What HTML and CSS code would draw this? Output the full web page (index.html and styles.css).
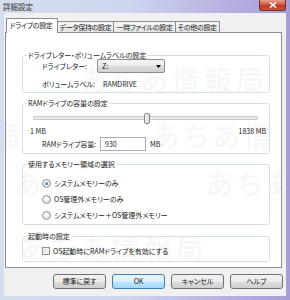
FILE: index.html
```html
<!DOCTYPE html>
<html lang="ja">
<head>
    <meta charset="UTF-8" />
    <title>詳細設定</title>
    <link rel="stylesheet" href="styles.css">
</head>
<body>
    <div class="window">
        <div class="titlebar">
            <span class="title">詳細設定</span>
            <span class="close">
                <svg width="8" height="6" viewBox="0 0 8 6"><path d="M1 0.5 L7 5.5 M7 0.5 L1 5.5" stroke="#fff" stroke-width="1.6"/></svg>
            </span>
        </div>
        <div class="client">
            <div class="tabs">
                <div class="tab active">ドライブの設定</div>
                <div class="tab">データ保持の設定</div>
                <div class="tab">一時ファイルの設定</div>
                <div class="tab">その他の設定</div>
            </div>
            <div class="panel">
                <!-- faint site watermark over the panel -->
                <div class="watermark">
                    <span class="wm-row r1">あちあ情報局</span>
                    <span class="wm-row r2">局　　　　あちあ情</span>
                    <span class="wm-row r3">あ　　　　　あちあ</span>
                    <span class="wm-row r4">あちあ情報局</span>
                </div>

                <fieldset class="group g-drive">
                    <legend>ドライブレター・ボリュームラベルの設定</legend>
                    <div class="row">
                        <span class="label">ドライブレター:</span>
                        <div class="combo">
                            <span>Z:</span>
                            <svg width="5" height="3" viewBox="0 0 5 3"><path d="M0 0 H5 L2.5 3 Z" fill="#000"/></svg>
                        </div>
                    </div>
                    <div class="row">
                        <span class="label">ボリュームラベル:</span>
                        <span class="value">RAMDRIVE</span>
                    </div>
                </fieldset>

                <fieldset class="group g-size">
                    <legend>RAMドライブの容量の設定</legend>
                    <div class="slider">
                        <div class="track"></div>
                        <div class="thumb" style="left: 50.6%;"></div>
                    </div>
                    <div class="scale">
                        <span>1 MB</span>
                        <span>1838 MB</span>
                    </div>
                    <div class="row">
                        <span class="label wide">RAMドライブ容量:</span>
                        <div class="input">930</div>
                        <span class="unit">MB</span>
                    </div>
                </fieldset>

                <fieldset class="group g-memory">
                    <legend>使用するメモリー領域の選択</legend>
                    <div class="option"><span class="radio checked"></span>システムメモリーのみ</div>
                    <div class="option"><span class="radio"></span>OS管理外メモリーのみ</div>
                    <div class="option"><span class="radio"></span>システムメモリー＋OS管理外メモリー</div>
                </fieldset>

                <fieldset class="group g-boot">
                    <legend>起動時の設定</legend>
                    <div class="option"><span class="checkbox"></span>OS起動時にRAMドライブを有効にする</div>
                </fieldset>
            </div>
            <div class="buttons">
                <div class="btn">標準に戻す</div>
                <div class="btn default">OK</div>
                <div class="btn">キャンセル</div>
                <div class="btn">ヘルプ</div>
            </div>
        </div>
    </div>
</body>
</html>
```

FILE: styles.css
```css
body { margin: 0; font-family: "Noto Sans CJK JP", "Liberation Sans", sans-serif; font-size: 7px; font-feature-settings: "palt"; color: #222; }
.window { width: 290px; height: 300px; display: flex; flex-direction: column; background: linear-gradient(90deg, #d5deee 0%, #cdd5ef 45%, #b5aee0 80%, #a69fd6 100%); }
.titlebar { height: 13px; display: flex; justify-content: space-between; align-items: flex-start; }
.title { padding: 2px 0 0 3px; line-height: 9px; font-size: 7.5px; color: #333; }
.close { width: 25px; height: 10px; margin-right: 4px; border: 1px solid #7a2f25; border-top: 0; border-radius: 0 0 3px 3px; background: linear-gradient(#eaa08e, #d05a45 45%, #bb3a26 55%, #c9553d); display: flex; align-items: center; justify-content: center; }

.client { flex: 1; margin: 0 4px 4px; background: #f0f0f0; padding: 5px 4px 0 1px; }
.tabs { display: flex; align-items: flex-end; height: 15px; margin-bottom: -1px; padding-left: 1px; position: relative; z-index: 1; }
.tab { height: 10px; line-height: 10px; margin-bottom: 1px; margin-right: -1px; padding: 0 2px; border: 1px solid #898c95; border-bottom: 0; background: linear-gradient(#f5f5f5, #e4e4e4); white-space: nowrap; letter-spacing: -0.3px; }
.tab.active { height: 14px; line-height: 13px; margin: 0 -3px 0 0; padding: 0 4px 0 3px; background: #fff; position: relative; z-index: 2; }
.tab.active + .tab { padding-left: 4px; }

.panel { position: relative; overflow: hidden; background: #fff; border: 1px solid #898c95; padding: 18px 11px 5px 16px; }
.watermark { position: absolute; inset: 0; pointer-events: none; }
.wm-row { position: absolute; white-space: nowrap; font-size: 28px; font-weight: bold; letter-spacing: 4px; color: rgba(0, 0, 0, 0.04); }
.wm-row.r1 { top: 26px; left: 74px; }
.wm-row.r2 { top: 82px; left: -14px; }
.wm-row.r3 { top: 130px; left: 8px; }
.wm-row.r4 { top: 194px; left: 14px; }

.group { position: relative; margin: 0; border: 1px solid #d5dfe5; border-radius: 3px; padding: 0 3px 1px 5px; }
.group legend { padding: 0 1px; margin-left: -1px; line-height: 8px; }
.group + .group { margin-top: 6px; }
.g-memory { padding-top: 10px; padding-bottom: 4px; }
.g-boot { padding-top: 6px; padding-bottom: 5px; }
.group.g-boot { margin-top: 7px; }

.row { display: flex; align-items: center; height: 14px; margin-left: 14px; }
.row + .row { margin-top: 4px; }
.label { width: 55px; white-space: nowrap; }
.label.wide { width: 58px; }
.value { padding-left: 6px; }
.combo { width: 60px; height: 12px; padding: 0 3px; border: 1px solid #8d8d8d; border-radius: 2px; background: linear-gradient(#f4f4f4, #ebebeb 50%, #dcdcdc 51%, #d0d0d0); display: flex; align-items: center; justify-content: space-between; }
.combo span { padding-left: 1px; }

.slider { position: relative; height: 12px; margin: 5px 0 0 5px; width: 225px; display: flex; align-items: center; }
.track { flex: 1; height: 2px; border: 1px solid #c9cbce; border-radius: 1px; background: #e7eaea; }
.thumb { position: absolute; top: 1px; width: 4px; height: 9px; margin-left: -3px; border: 1px solid #7c8690; border-radius: 2px; background: linear-gradient(90deg, #f4f4f4, #dcdcdc); }
.scale { display: flex; justify-content: space-between; height: 10px; line-height: 10px; margin: 2px 0 0 2px; }
.g-size .row { margin-top: 1px; margin-bottom: 1px; }
.input { width: 40px; height: 12px; line-height: 12px; padding-left: 4px; border: 1px solid #abadb3; background: #fff; }
.unit { padding-left: 4px; }

.option { display: flex; align-items: center; height: 10px; margin-left: 14px; white-space: nowrap; }
.option + .option { margin-top: 6px; }
.radio { width: 7px; height: 7px; margin-right: 3px; border: 1px solid #8e8f8f; border-radius: 50%; background: radial-gradient(circle at 40% 40%, #fbfbfb, #dcdcdc); display: flex; align-items: center; justify-content: center; }
.radio.checked::after { content: ""; width: 3px; height: 3px; border-radius: 50%; background: radial-gradient(circle at 35% 35%, #7fb2cf, #1f5378); }
.checkbox { width: 6px; height: 6px; margin-right: 3px; border: 1px solid #8e8f8f; background: linear-gradient(135deg, #dcdcdc, #f7f7f7); box-shadow: inset 0 0 0 1px #f4f4f4; }

.buttons { display: flex; justify-content: flex-end; gap: 6px; margin: 6px -1px 0 0; }
.btn { width: 51px; height: 13px; line-height: 13px; text-align: center; border: 1px solid #707070; border-radius: 3px; background: linear-gradient(#f2f2f2, #ebebeb 50%, #dddddd 51%, #cfcfcf); }
.btn.default { border-color: #3c7fb1; background: linear-gradient(#eaf6fd, #d9f0fc 50%, #bee6fd 51%, #a7d9f5); }
```
